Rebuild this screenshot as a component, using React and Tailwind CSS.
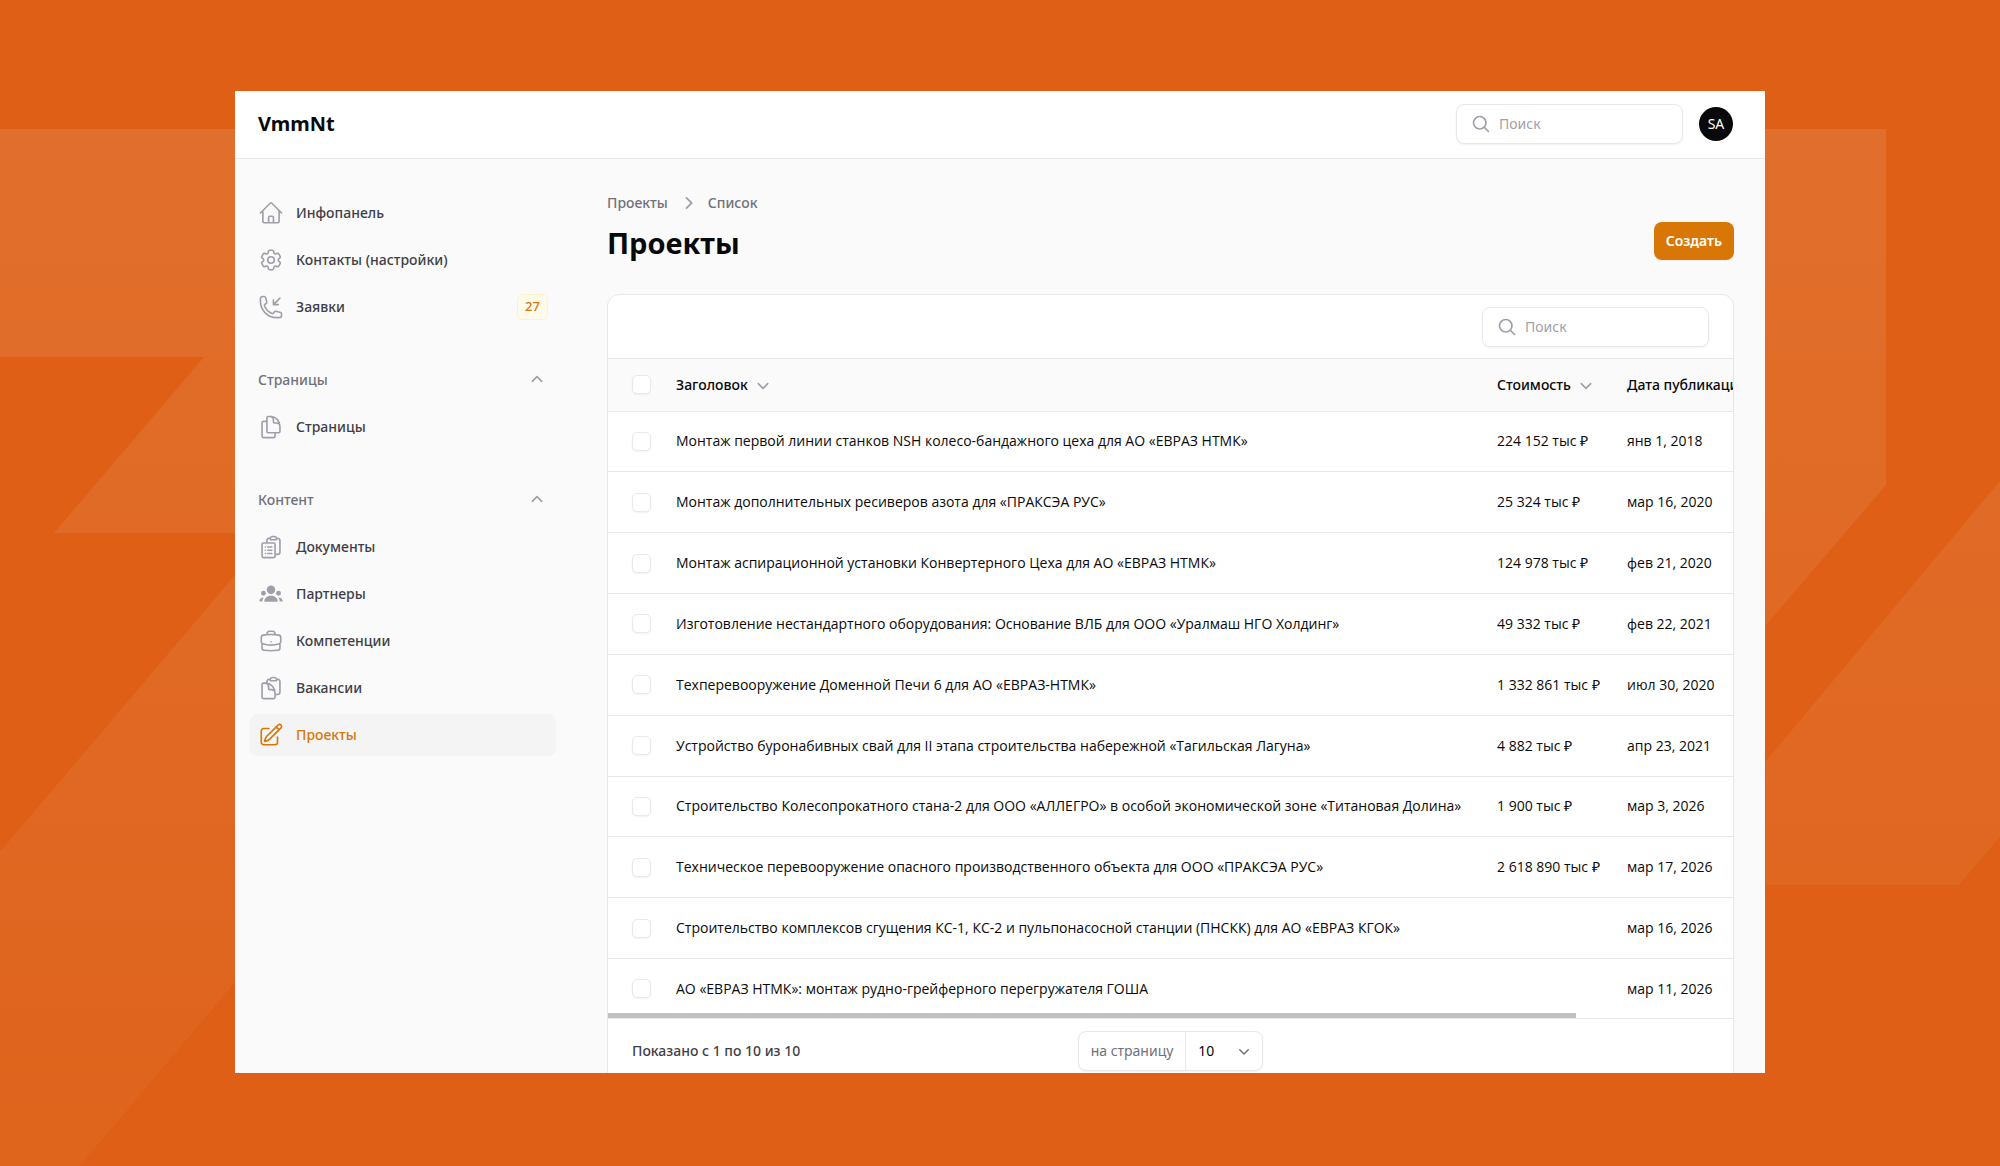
import {
  HiOutlineHome,
  HiOutlineCog6Tooth,
  HiOutlinePhoneArrowDownLeft,
  HiOutlineDocumentDuplicate,
  HiOutlineClipboardDocumentList,
  HiOutlineBriefcase,
  HiOutlineClipboardDocument,
  HiOutlinePencilSquare,
  HiOutlineMagnifyingGlass,
  HiMiniChevronUp,
  HiMiniChevronDown,
  HiMiniChevronRight,
} from "react-icons/hi2";

function TeamIcon({ className }) {
  return (
    <svg viewBox="0 0 24 24" fill="currentColor" className={className} aria-hidden="true">
      <circle cx="12" cy="8" r="3.9" />
      <circle cx="5" cy="11.3" r="2.2" />
      <circle cx="19" cy="11.3" r="2.2" />
      <path d="M12 13.5c-3.3 0-6 1.900-6.200 4.900 0 .5.3.8.8.8h10.800c.5 0 .8-.3.8-.8-.2-3-2.900-4.900-6.200-4.900Z" />
      <path d="M5.200 15.200c-1.900-.1-3.500 1-3.900 2.900-.1.500.1.900.6.900h2.100c0-1.400.4-2.700 1.200-3.800Z" />
      <path d="M18.800 15.200c1.900-.1 3.500 1 3.900 2.900.1.500-.1.900-.6.900h-2.100c0-1.400-.4-2.700-1.200-3.800Z" />
    </svg>
  );
}

const mainItems = [
  { label: "Инфопанель", icon: HiOutlineHome },
  { label: "Контакты (настройки)", icon: HiOutlineCog6Tooth },
  { label: "Заявки", icon: HiOutlinePhoneArrowDownLeft, badge: "27" },
];

const groups = [
  { title: "Страницы", items: [{ label: "Страницы", icon: HiOutlineDocumentDuplicate }] },
  {
    title: "Контент",
    items: [
      { label: "Документы", icon: HiOutlineClipboardDocumentList },
      { label: "Партнеры", icon: TeamIcon },
      { label: "Компетенции", icon: HiOutlineBriefcase },
      { label: "Вакансии", icon: HiOutlineClipboardDocument },
      { label: "Проекты", icon: HiOutlinePencilSquare, active: true },
    ],
  },
];

const rows = [
  ["Монтаж первой линии станков NSH колесо-бандажного цеха для АО «ЕВРАЗ НТМК»", "224 152 тыс ₽", "янв 1, 2018"],
  ["Монтаж дополнительных ресиверов азота для «ПРАКСЭА РУС»", "25 324 тыс ₽", "мар 16, 2020"],
  ["Монтаж аспирационной установки Конвертерного Цеха для АО «ЕВРАЗ НТМК»", "124 978 тыс ₽", "фев 21, 2020"],
  ["Изготовление нестандартного оборудования: Основание ВЛБ для ООО «Уралмаш НГО Холдинг»", "49 332 тыс ₽", "фев 22, 2021"],
  ["Техперевооружение Доменной Печи 6 для АО «ЕВРАЗ-НТМК»", "1 332 861 тыс ₽", "июл 30, 2020"],
  ["Устройство буронабивных свай для II этапа строительства набережной «Тагильская Лагуна»", "4 882 тыс ₽", "апр 23, 2021"],
  ["Строительство Колесопрокатного стана-2 для ООО «АЛЛЕГРО» в особой экономической зоне «Титановая Долина»", "1 900 тыс ₽", "мар 3, 2026"],
  ["Техническое перевооружение опасного производственного объекта для ООО «ПРАКСЭА РУС»", "2 618 890 тыс ₽", "мар 17, 2026"],
  ["Строительство комплексов сгущения КС-1, КС-2 и пульпонасосной станции (ПНСКК) для АО «ЕВРАЗ КГОК»", "", "мар 16, 2026"],
  ["АО «ЕВРАЗ НТМК»: монтаж рудно-грейферного перегружателя ГОША", "", "мар 11, 2026"],
];

function Backdrop() {
  return (
    <svg
      viewBox="0 0 2000 1166"
      preserveAspectRatio="none"
      className="pointer-events-none absolute inset-0 h-full w-full"
      aria-hidden="true"
    >
      <defs>
        <linearGradient id="shade" x1="0" y1="129" x2="0" y2="1166" gradientUnits="userSpaceOnUse">
          <stop offset="0" stopColor="#fff" stopOpacity="0.1" />
          <stop offset="1" stopColor="#fff" stopOpacity="0.03" />
        </linearGradient>
      </defs>
      <g fill="url(#shade)">
        <path d="M0 129H1000V533H54L204 357H0Z" />
        <path d="M0 852L235 575H600V982H235L80 1166H0Z" />
        <path d="M1000 129H1886V485L1766 625H1000Z" />
        <path d="M2000 481L1766 761V885H1959L2000 837Z" />
      </g>
    </svg>
  );
}

function SearchBox({ id, label }) {
  return (
    <div className="flex h-10 w-[227px] items-center gap-2 rounded-lg border border-[#e8e8ea] bg-white px-3 shadow-xs">
      <label htmlFor={id} className="shrink-0 pl-0.5">
        <span className="sr-only">{label}</span>
        <HiOutlineMagnifyingGlass className="size-5 stroke-2 text-zinc-400" />
      </label>
      <input
        id={id}
        type="search"
        placeholder="Поиск"
        className="h-6 min-w-0 flex-1 bg-transparent text-sm text-zinc-900 outline-none placeholder:text-zinc-400"
      />
    </div>
  );
}

function NavItem({ item }) {
  const Icon = item.icon;
  return (
    <li>
      <a
        href="#"
        aria-current={item.active ? "page" : undefined}
        className={
          item.active
            ? "flex h-[42px] items-center gap-3 rounded-lg bg-zinc-100 px-2 text-[#d97706]"
            : "flex h-[42px] items-center gap-3 rounded-lg px-2 text-zinc-700"
        }
      >
        <Icon className={item.active ? "size-[26px] shrink-0 text-[#d97706]" : "size-[26px] shrink-0 text-zinc-400"} />
        <span className="flex-1 text-sm font-medium">{item.label}</span>
        {item.badge && (
          <span className="flex h-[26px] w-[31px] items-center justify-center rounded-md border border-amber-100 bg-amber-50 text-[13px] font-medium text-[#d97706]">
            {item.badge}
          </span>
        )}
      </a>
    </li>
  );
}

function Checkbox({ label }) {
  return (
    <input
      type="checkbox"
      aria-label={label}
      className="block size-[19px] appearance-none rounded-[5px] border border-[#e8e8ea] bg-white shadow-xs checked:bg-[#d97706]"
    />
  );
}

function Sidebar() {
  return (
    <nav className="w-[341px] shrink-0 pt-[33px] pr-5 pl-[15px]">
      <div className="flex flex-col gap-[31px]">
        <ul className="flex flex-col gap-[5px]">
          {mainItems.map((item) => (
            <NavItem key={item.label} item={item} />
          ))}
        </ul>
        {groups.map((group) => (
          <section key={group.title} className="flex flex-col gap-[5px]">
            <button type="button" className="flex h-[42px] items-center justify-between px-2 text-zinc-500">
              <span className="text-sm font-medium">{group.title}</span>
              <HiMiniChevronUp className="size-[22px] text-zinc-400" />
            </button>
            <ul className="flex flex-col gap-[5px]">
              {group.items.map((item) => (
                <NavItem key={item.label} item={item} />
              ))}
            </ul>
          </section>
        ))}
      </div>
    </nav>
  );
}

function ProjectTable() {
  return (
    <div className="relative overflow-hidden">
      <table className="h-[659px] w-[1310px] table-fixed text-left text-sm">
        <colgroup>
          <col className="w-14" />
          <col className="w-[821px]" />
          <col className="w-[130px]" />
          <col />
        </colgroup>
        <thead>
          <tr className="h-[52px] border-b border-[#e8e8ea] bg-zinc-50 text-zinc-950">
            <th className="pl-6">
              <Checkbox label="Выбрать все" />
            </th>
            <th className="px-3 font-medium">
              <button type="button" className="flex items-center gap-1">
                Заголовок
                <HiMiniChevronDown className="size-[22px] text-zinc-400" />
              </button>
            </th>
            <th className="px-3 font-medium">
              <button type="button" className="flex items-center gap-1">
                Стоимость
                <HiMiniChevronDown className="size-[22px] text-zinc-400" />
              </button>
            </th>
            <th className="px-3 font-medium">Дата публикации</th>
          </tr>
        </thead>
        <tbody className="divide-y divide-[#e8e8ea] font-['Open_Sans',sans-serif] text-zinc-950">
          {rows.map(([title, price, date]) => (
            <tr key={title}>
              <td className="pl-6">
                <Checkbox label={title} />
              </td>
              <td className="px-3 whitespace-nowrap">{title}</td>
              <td className="px-3 whitespace-nowrap">{price}</td>
              <td className="px-3 whitespace-nowrap">{date}</td>
            </tr>
          ))}
        </tbody>
      </table>
      <div className="absolute bottom-0 left-0 h-[5px] w-[86%] bg-[#c1c1c1]" />
    </div>
  );
}

export default function App() {
  return (
    <div className="relative h-screen overflow-hidden bg-[#de5f15] px-[235px] pt-[91px] pb-[93px] font-['Noto_Sans',sans-serif]">
      <Backdrop />
      <div className="relative flex h-full flex-col overflow-hidden bg-zinc-50">
        <header className="flex h-[68px] shrink-0 items-center justify-between border-b border-[#e8e8ea] bg-white pr-8 pb-0.5 pl-[23px]">
          <a href="#" className="text-xl font-bold text-zinc-950">
            VmmNt
          </a>
          <div className="flex items-center gap-4">
            <SearchBox id="global-search" label="Глобальный поиск" />
            <button type="button" className="size-[34px] rounded-full bg-zinc-950 text-sm text-white">
              SA
            </button>
          </div>
        </header>
        <div className="flex min-h-0 flex-1">
          <Sidebar />
          <main className="min-w-0 flex-1 px-[31px] pt-[34px]">
            <div className="flex items-center justify-between">
              <div>
                <div className="flex h-5 items-center gap-2 text-sm font-medium text-zinc-500">
                  <a href="#">Проекты</a>
                  <HiMiniChevronRight className="size-6 text-zinc-400" />
                  <a href="#">Список</a>
                </div>
                <h1 className="mt-3 text-[29px] leading-9 font-bold text-zinc-950">Проекты</h1>
              </div>
              <button
                type="button"
                className="mt-7 h-[38px] rounded-lg bg-[#d97706] px-3 text-sm font-semibold text-white shadow-xs"
              >
                Создать
              </button>
            </div>
            <section className="mt-[33px] overflow-hidden rounded-xl border border-[#e8e8ea] bg-white">
              <div className="flex h-16 items-center justify-end border-b border-[#e8e8ea] px-6">
                <SearchBox id="table-search" label="Поиск по таблице" />
              </div>
              <ProjectTable />
              <footer className="grid grid-cols-[1fr_auto_1fr] items-center border-t border-[#e8e8ea] px-6 py-3">
                <p className="text-sm font-medium text-zinc-700">Показано с 1 по 10 из 10</p>
                <div className="flex h-10 items-center rounded-lg border border-[#e8e8ea] bg-white text-sm shadow-xs">
                  <label htmlFor="per-page" className="flex h-full items-center border-r border-[#e8e8ea] px-3 text-zinc-500">
                    на страницу
                  </label>
                  <div className="flex items-center pr-2">
                    <select
                      id="per-page"
                      defaultValue="10"
                      className="w-12 appearance-none bg-transparent pl-3 text-zinc-950 outline-none"
                    >
                      <option>10</option>
                      <option>25</option>
                      <option>50</option>
                    </select>
                    <HiMiniChevronDown className="pointer-events-none size-5 text-zinc-500" />
                  </div>
                </div>
              </footer>
            </section>
          </main>
        </div>
      </div>
    </div>
  );
}
